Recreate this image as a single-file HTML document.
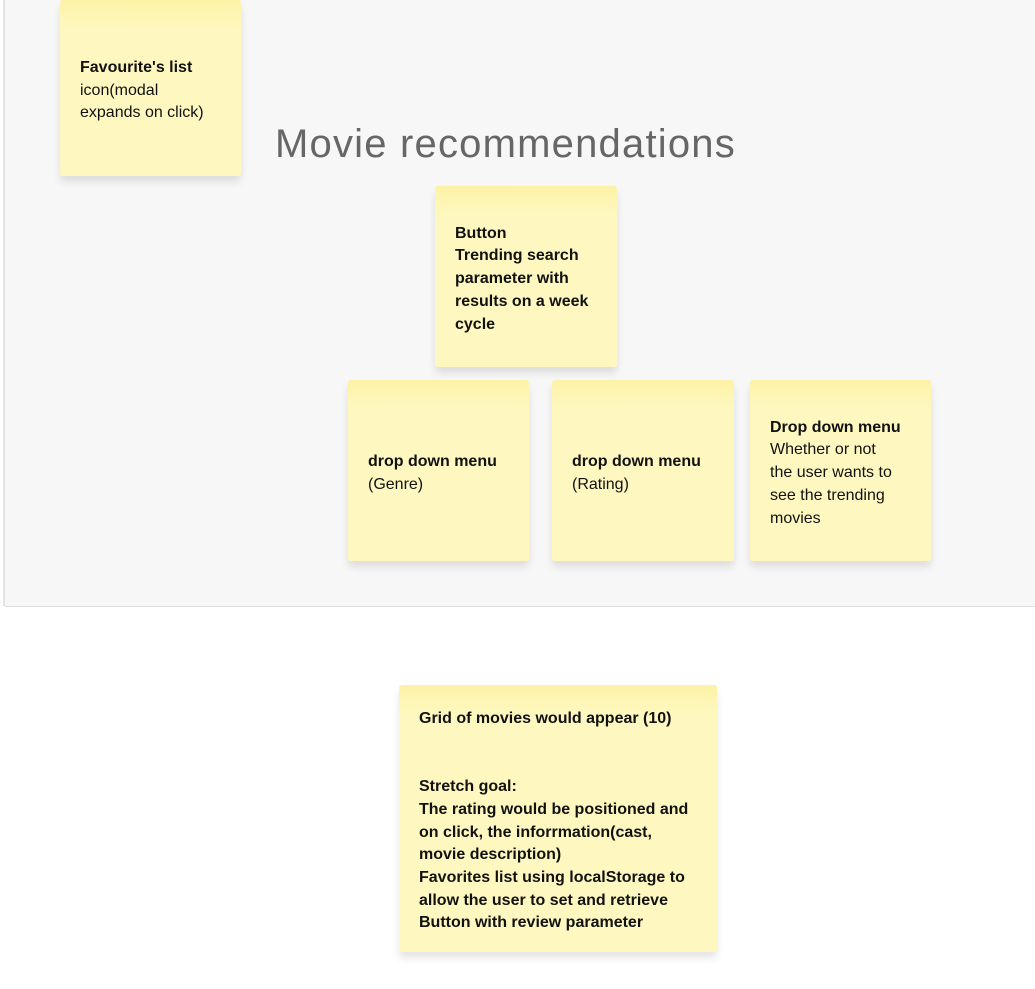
<!DOCTYPE html>
<html><head><meta charset="utf-8"><style>
body{margin:0;width:1035px;height:989px;background:#fff;position:relative;overflow:hidden;font-family:"Liberation Sans",sans-serif;}
.top{position:absolute;left:5px;top:0;width:1030px;height:606px;background:#f7f7f7;border-bottom:1px solid #dcdcdc;}
.edge{position:absolute;left:3px;top:0;width:2px;height:606px;background:#e4e4e4;}
.n{position:absolute;box-sizing:border-box;border-radius:3px;background:linear-gradient(#fdf2a6 0,#fef8c0 30px,#fef8c0 100%);box-shadow:0 6px 8px rgba(0,0,0,0.10);padding:6px 20px 0;font-size:16px;line-height:22.7px;color:#111;display:flex;flex-direction:column;justify-content:center;}
.n b{font-weight:bold;}
h1{position:absolute;left:275px;top:122px;margin:0;font-family:"Liberation Sans",sans-serif;font-weight:normal;font-size:40px;letter-spacing:1.2px;color:#666;}
</style></head><body>
<div class="top"></div><div class="edge"></div>
<div class="n" style="left:60px;top:0;width:181px;height:176px;"><div><b>Favourite's list</b><br>icon(modal<br>expands on click)</div></div>
<h1>Movie recommendations</h1>
<div class="n" style="left:435px;top:186px;width:182px;height:181px;"><div><b>Button<br>Trending search<br>parameter with<br>results on a week<br>cycle</b></div></div>
<div class="n" style="left:348px;top:380px;width:181px;height:181px;"><div><b>drop down menu</b><br>(Genre)</div></div>
<div class="n" style="left:552px;top:380px;width:182px;height:181px;"><div><b>drop down menu</b><br>(Rating)</div></div>
<div class="n" style="left:750px;top:380px;width:181px;height:181px;"><div><b>Drop down menu</b><br>Whether or not<br>the user wants to<br>see the trending<br>movies</div></div>
<div class="n" style="left:399px;top:685px;width:318px;height:267px;"><div><b>Grid of movies would appear (10)<br><br><br>Stretch goal:<br>The rating would be positioned and<br>on click, the inforrmation(cast,<br>movie description)<br>Favorites list using localStorage to<br>allow the user to set and retrieve<br>Button with review parameter</b></div></div>
</body></html>
